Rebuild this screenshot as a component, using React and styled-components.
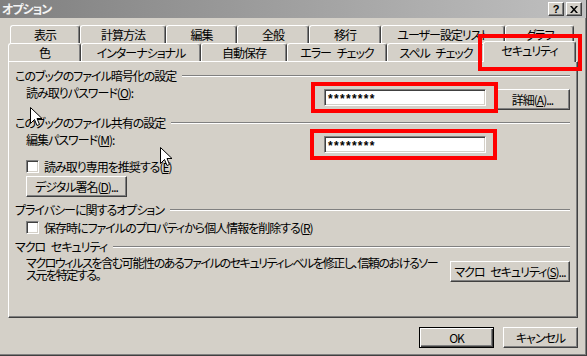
import React from "react";
import styled, { createGlobalStyle } from "styled-components";

const GlobalStyle = createGlobalStyle`
  html, body {
    margin: 0;
    padding: 0;
    background: #d4d0c8;
  }
  body {
    font-family: "Noto Sans CJK JP", "Noto Sans", sans-serif;
    font-size: 12px;
    color: #000;
    font-feature-settings: "palt";
    letter-spacing: -1px;
    word-spacing: 4px;
  }
`;

const backTabs = [
  { label: "表示", width: 70 },
  { label: "計算方法", width: 86 },
  { label: "編集", width: 71 },
  { label: "全般", width: 72 },
  { label: "移行", width: 72 },
  { label: "ユーザー設定リスト", width: 124 },
  { label: "グラフ", width: 69 },
];

const frontTabs = [
  { label: "色", width: 73 },
  { label: "インターナショナル", width: 120 },
  { label: "自動保存", width: 86 },
  { label: "エラー チェック", width: 100 },
  { label: "スペル チェック", width: 98 },
  { label: "セキュリティ", width: 93, active: true },
];

const App = () => {
  return (
    <>
      <GlobalStyle />
      <Window>
        <TitleBar>
          <Title>オプション</Title>
          <CaptionButtons>
            <CaptionButton>?</CaptionButton>
            <CaptionButton>
              <svg width="8" height="7" viewBox="0 0 8 7">
                <path d="M0 0h2l2 2.5L6 0h2L5 3.5 8 7H6L4 4.5 2 7H0l3-3.5z" fill="#000" />
              </svg>
            </CaptionButton>
          </CaptionButtons>
        </TitleBar>

        <TabStrip>
          <TabRow $offset={10}>
            {backTabs.map((t) => (
              <Tab key={t.label} $w={t.width}>
                {t.label}
              </Tab>
            ))}
          </TabRow>
          <TabRow $offset={8}>
            {frontTabs.map((t) => (
              <Tab key={t.label} $w={t.width} $active={t.active}>
                {t.label}
                {t.active && <Highlight $t={-8} $r={-7} $b={-9} $l={-6} />}
              </Tab>
            ))}
          </TabRow>
        </TabStrip>

        <Panel>
          <GroupHeader>
            <span>このブックのファイル暗号化の設定</span>
          </GroupHeader>
          <FieldRow $mt={6}>
            <FieldLabel>
              読み取りパスワード(<u>O</u>):
            </FieldLabel>
            <InputWrap>
              <PasswordBox>********</PasswordBox>
              <Highlight $t={-7} $r={-12} $b={-7} $l={-13} />
            </InputWrap>
            <Button $w={75} $ml={9}>
              <span>
                詳細(<u>A</u>)...
              </span>
            </Button>
          </FieldRow>

          <GroupHeader $mt={6}>
            <span>このブックのファイル共有の設定</span>
          </GroupHeader>
          <FieldRow $mt={6}>
            <FieldLabel>
              編集パスワード(<u>M</u>):
            </FieldLabel>
            <InputWrap>
              <PasswordBox>********</PasswordBox>
              <Highlight $t={-7} $r={-11} $b={-7} $l={-14} />
            </InputWrap>
            <Spacer />
          </FieldRow>
          <CheckRow $mt={7}>
            <CheckBox />
            <span>
              読み取り専用を推奨する(<u>E</u>)
            </span>
          </CheckRow>
          <Indent $mt={3}>
            <Button $w={101}>
              <span>
                デジタル署名(<u>D</u>)...
              </span>
            </Button>
          </Indent>

          <GroupHeader $mt={6}>
            <span>プライバシーに関するオプション</span>
          </GroupHeader>
          <CheckRow $mt={4}>
            <CheckBox />
            <span>
              保存時にファイルのプロパティから個人情報を削除する(<u>R</u>)
            </span>
          </CheckRow>

          <GroupHeader $mt={6}>
            <span>マクロ セキュリティ</span>
          </GroupHeader>
          <MacroRow>
            <Description>
              マクロウィルスを含む可能性のあるファイルのセキュリティレベルを修正し、信頼のおけるソー
              <br />
              ス元を特定する。
            </Description>
            <Button $w={120} $mt={4}>
              <span>
                マクロ セキュリティ(<u>S</u>)...
              </span>
            </Button>
          </MacroRow>
        </Panel>

        <Footer>
          <Button $w={75} $default>
            OK
          </Button>
          <Button $w={75}>キャンセル</Button>
        </Footer>

        <Cursor $x={30} $y={107} />
        <Cursor $x={160} $y={147} />
      </Window>
    </>
  );
};

const Cursor = ({ $x, $y }) => (
  <CursorSvg $x={$x} $y={$y} width="13" height="20" viewBox="0 0 13 20">
    <path
      d="M0.5 0.5 L0.5 16.5 L4.5 12.5 L7 18.5 L9.5 17.5 L7 11.5 L12 11.5 Z"
      fill="#fff"
      stroke="#000"
      strokeWidth="1"
    />
  </CursorSvg>
);

const Window = styled.div`
  position: relative;
  box-sizing: border-box;
  width: 587px;
  height: 356px;
  background: #d4d0c8;
  border-right: 1px solid #404040;
  border-bottom: 1px solid #404040;
  box-shadow: inset -1px -1px 0 #808080;
  display: flex;
  flex-direction: column;
  overflow: hidden;
`;

const TitleBar = styled.div`
  height: 18px;
  background: linear-gradient(to right, #808080, #c0c0c0);
  display: flex;
  align-items: center;
  justify-content: space-between;
  padding: 0 4px 0 2px;
`;

const Title = styled.span`
  color: #f4f4f4;
  font-weight: bold;
  font-size: 12px;
  line-height: 14px;
`;

const CaptionButtons = styled.div`
  display: flex;
  gap: 2px;
`;

const CaptionButton = styled.div`
  box-sizing: border-box;
  width: 16px;
  height: 14px;
  background: #d4d0c8;
  border-top: 1px solid #fff;
  border-left: 1px solid #fff;
  border-right: 1px solid #404040;
  border-bottom: 1px solid #404040;
  box-shadow: inset -1px -1px 0 #808080;
  display: flex;
  align-items: center;
  justify-content: center;
  font-family: "Liberation Sans", sans-serif;
  font-weight: bold;
  font-size: 11px;
  line-height: 11px;
  letter-spacing: 0;
`;

const TabStrip = styled.div`
  margin-top: 7px;
  display: flex;
  flex-direction: column;
`;

const TabRow = styled.div`
  display: flex;
  height: 18px;
  padding-left: ${(p) => p.$offset}px;
`;

const Tab = styled.div`
  position: relative;
  z-index: ${(p) => (p.$active ? 3 : 1)};
  box-sizing: border-box;
  flex: none;
  width: ${(p) => p.$w}px;
  height: ${(p) => (p.$active ? 21 : 18)}px;
  margin-top: ${(p) => (p.$active ? -2 : 0)}px;
  margin-left: ${(p) => (p.$active ? -2 : 0)}px;
  background: #d4d0c8;
  border-top: 1px solid #fff;
  border-left: 1px solid #fff;
  border-right: 1px solid #404040;
  border-radius: 3px 3px 0 0;
  box-shadow: inset -1px 0 0 #808080;
  display: flex;
  align-items: center;
  justify-content: center;
  padding-bottom: ${(p) => (p.$active ? 2 : 0)}px;
  line-height: 14px;
  white-space: nowrap;
`;

const Highlight = styled.div`
  position: absolute;
  z-index: 5;
  top: ${(p) => p.$t}px;
  right: ${(p) => p.$r}px;
  bottom: ${(p) => p.$b}px;
  left: ${(p) => p.$l}px;
  border: 4px solid #ff0000;
  pointer-events: none;
`;

const Panel = styled.div`
  position: relative;
  z-index: 2;
  box-sizing: border-box;
  margin-left: 8px;
  width: 570px;
  height: 257px;
  border-top: 1px solid #fff;
  border-left: 1px solid #fff;
  border-right: 1px solid #404040;
  border-bottom: 1px solid #404040;
  box-shadow: inset -1px -1px 0 #808080;
  padding: 7px 7px 0 6px;
  display: flex;
  flex-direction: column;
`;

const GroupHeader = styled.div`
  display: flex;
  align-items: center;
  gap: 6px;
  height: 14px;
  line-height: 14px;
  margin-top: ${(p) => p.$mt || 0}px;
  white-space: nowrap;
  &::after {
    content: "";
    flex: 1;
    border-top: 1px solid #808080;
    border-bottom: 1px solid #fff;
  }
`;

const FieldRow = styled.div`
  display: flex;
  align-items: flex-start;
  margin-top: ${(p) => p.$mt || 0}px;
`;

const FieldLabel = styled.div`
  flex: 1;
  padding-left: 11px;
  line-height: 14px;
  margin-top: -3px;
`;

const InputWrap = styled.div`
  position: relative;
  flex: none;
`;

const PasswordBox = styled.div`
  box-sizing: border-box;
  width: 162px;
  height: 17px;
  background: #fff;
  border-top: 1px solid #808080;
  border-left: 1px solid #808080;
  border-right: 1px solid #fff;
  border-bottom: 1px solid #fff;
  box-shadow: inset 1px 1px 0 #404040, inset -1px -1px 0 #d4d0c8;
  padding: 1px 0 0 3px;
  font-family: "Liberation Sans", sans-serif;
  font-weight: bold;
  font-size: 12px;
  line-height: 16px;
  letter-spacing: 1.3px;
`;

const Spacer = styled.div`
  width: 84px;
  flex: none;
`;

const Button = styled.div`
  box-sizing: border-box;
  flex: none;
  width: ${(p) => p.$w}px;
  height: 21px;
  margin-left: ${(p) => p.$ml || 0}px;
  margin-top: ${(p) => p.$mt || 0}px;
  background: #d4d0c8;
  border-top: 1px solid #fff;
  border-left: 1px solid #fff;
  border-right: 1px solid #404040;
  border-bottom: 1px solid #404040;
  box-shadow: inset -1px -1px 0 #808080;
  display: flex;
  align-items: center;
  justify-content: center;
  line-height: 14px;
  white-space: nowrap;
  ${(p) =>
    p.$default &&
    `
    border: 1px solid #000;
    box-shadow: inset 1px 1px 0 #fff, inset -1px -1px 0 #404040, inset -2px -2px 0 #808080;
  `}
`;

const CheckRow = styled.div`
  display: flex;
  align-items: center;
  gap: 5px;
  height: 13px;
  padding-left: 11px;
  margin-top: ${(p) => p.$mt || 0}px;
  line-height: 14px;
  white-space: nowrap;
`;

const CheckBox = styled.div`
  box-sizing: border-box;
  flex: none;
  width: 13px;
  height: 13px;
  background: #fff;
  border-top: 1px solid #808080;
  border-left: 1px solid #808080;
  border-right: 1px solid #fff;
  border-bottom: 1px solid #fff;
  box-shadow: inset 1px 1px 0 #404040, inset -1px -1px 0 #d4d0c8;
`;

const Indent = styled.div`
  display: flex;
  padding-left: 11px;
  margin-top: ${(p) => p.$mt || 0}px;
`;

const MacroRow = styled.div`
  display: flex;
  align-items: flex-start;
  justify-content: space-between;
  margin-top: 3px;
`;

const Description = styled.div`
  padding-left: 11px;
  line-height: 12px;
  white-space: nowrap;
  letter-spacing: -1.4px;
`;

const Footer = styled.div`
  display: flex;
  justify-content: flex-end;
  gap: 9px;
  padding: 9px 8px 0 0;
`;

const CursorSvg = styled.svg`
  position: absolute;
  z-index: 10;
  left: ${(p) => p.$x}px;
  top: ${(p) => p.$y}px;
`;

export default App;
